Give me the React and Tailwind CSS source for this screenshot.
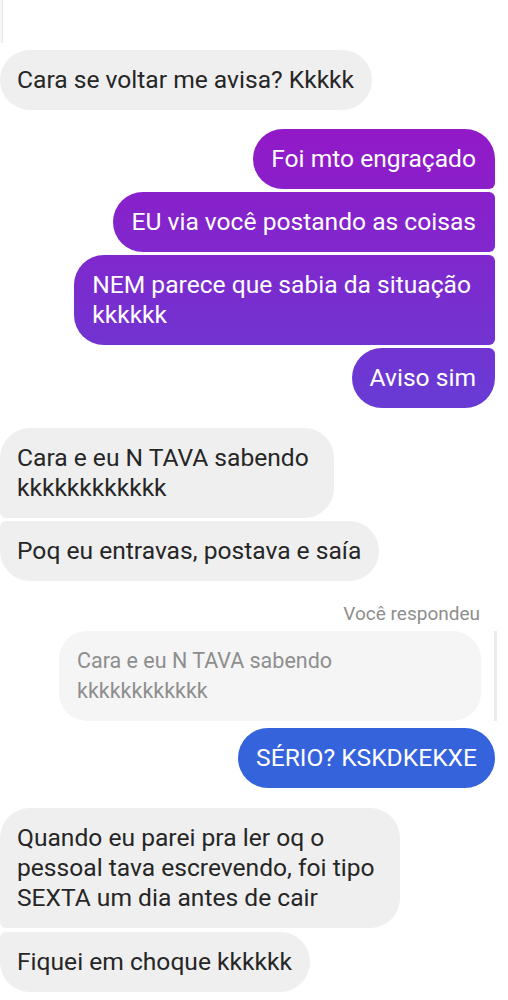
import React from 'react'

const font = { fontFamily: 'Roboto, "Noto Sans", sans-serif' }

const Received = ({ children, corners = 'rounded-[30px]', extra = '' }) => (
  <div className="flex justify-start">
    <div className={`bg-[#efefef] text-[#262626] text-[24.6px] leading-[30px] py-[15px] pl-[17px] pr-[18px] whitespace-pre-line ${corners} ${extra}`}>
      {children}
    </div>
  </div>
)

const Sent = ({ children, corners, extra = '' }) => (
  <div className="flex justify-end pr-[13px]">
    <div className={`text-white text-[24.6px] leading-[30px] py-[15px] pl-[18px] pr-[19px] whitespace-pre-line bg-fixed bg-[linear-gradient(180deg,#a30fc1_0px,#8e1cc9_160px,#6c38d3_380px,#3563dc_760px,#3563dc_1000px)] ${corners} ${extra}`}>
      {children}
    </div>
  </div>
)

export default function App() {
  return (
    <div className="min-h-screen bg-white relative" style={font}>
      {/* edge of a bubble above */}
      <div className="absolute left-0 top-0 w-[3px] h-[43px] border-r border-[#e6e6e6] bg-[#f7f7f7]" />

      <div className="flex flex-col pt-[50px]">
        <Received>Cara se voltar me avisa? Kkkkk</Received>

        <div className="flex flex-col gap-[3px] mt-[19px]">
          <Sent corners="rounded-[30px] rounded-br-[6px]">Foi mto engraçado</Sent>
          <Sent corners="rounded-l-[30px] rounded-r-[6px]">EU via você postando as coisas</Sent>
          <Sent corners="rounded-l-[30px] rounded-r-[6px]" extra="pr-[24px]">{'NEM parece que sabia da situação\nkkkkkk'}</Sent>
          <Sent corners="rounded-[30px] rounded-tr-[6px]">Aviso sim</Sent>
        </div>

        <div className="flex flex-col gap-[3px] mt-[20px]">
          <Received corners="rounded-[30px] rounded-bl-[6px]" extra="pr-[25px]">{'Cara e eu N TAVA sabendo\nkkkkkkkkkkkk'}</Received>
          <Received corners="rounded-[30px] rounded-tl-[6px]">Poq eu entravas, postava e saía</Received>
        </div>

        <div className="flex justify-end pr-[28px] mt-[22px] text-[19px] leading-[22px] text-[#8e8e8e]">
          Você respondeu
        </div>

        <div className="flex justify-end items-stretch mt-[6px] pr-[11px]">
          <div className="bg-[#f5f5f5] text-[#8e8e8e] text-[21.5px] leading-[30px] py-[15px] pl-[18px] pr-[24px] rounded-[28px] w-[422px] whitespace-pre-line">
            {'Cara e eu N TAVA sabendo\nkkkkkkkkkkkk'}
          </div>
          <div className="w-[3px] bg-[#ececec] ml-[13px]" />
        </div>

        <div className="flex justify-end pr-[13px] mt-[7px]">
          <div className="bg-[#3563dc] text-white text-[24.6px] leading-[30px] py-[15px] px-[18px] rounded-[30px]">
            SÉRIO? KSKDKEKXE
          </div>
        </div>

        <div className="flex flex-col gap-[4px] mt-[20px]">
          <Received corners="rounded-[30px] rounded-bl-[6px]" extra="pr-[25px]">{'Quando eu parei pra ler oq o\npessoal tava escrevendo, foi tipo\nSEXTA um dia antes de cair'}</Received>
          <Received corners="rounded-[30px] rounded-tl-[6px]">Fiquei em choque kkkkkk</Received>
        </div>
      </div>
    </div>
  )
}
